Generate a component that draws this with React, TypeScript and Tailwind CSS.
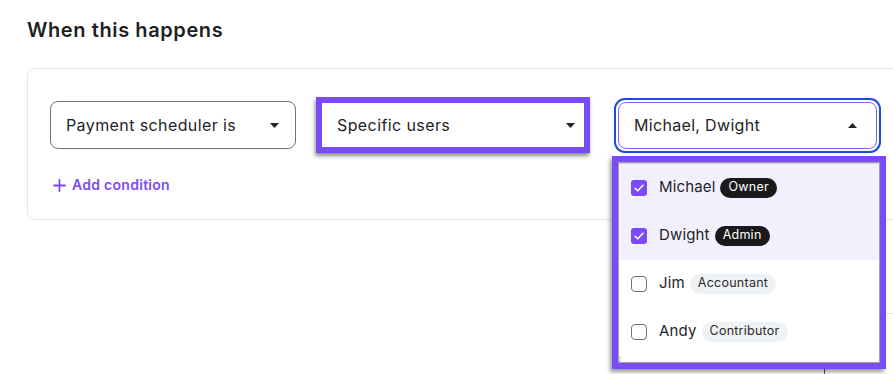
import React from "react";

const Caret = ({ up = false }: { up?: boolean }) => (
  <svg width="9" height="5" viewBox="0 0 9 5" className="shrink-0">
    {up ? (
      <path d="M0 5 L4.5 0 L9 5 Z" fill="#1f2328" />
    ) : (
      <path d="M0 0 L9 0 L4.5 5 Z" fill="#1f2328" />
    )}
  </svg>
);

const Check = () => (
  <svg width="10" height="8" viewBox="0 0 10 8" fill="none">
    <path d="M1 4.2 L3.7 6.8 L9 1.2" stroke="white" strokeWidth="1.5" strokeLinecap="round" strokeLinejoin="round" />
  </svg>
);

const users = [
  { name: "Michael", role: "Owner", checked: true },
  { name: "Dwight", role: "Admin", checked: true },
  { name: "Jim", role: "Accountant", checked: false },
  { name: "Andy", role: "Contributor", checked: false },
];

export default function App() {
  return (
    <div
      className="relative h-[374px] w-full overflow-hidden bg-white text-[#1f2328]"
      style={{ fontFamily: "Inter, 'Noto Sans', sans-serif" }}
    >
      {/* table behind the dropdown */}
      <div className="absolute left-[640px] right-0 top-[313px] h-[61px] border-t border-[#e5e7eb]">
        <div className="absolute left-[184px] top-0 h-full border-l border-[#4b5563]" />
      </div>

      <div className="relative pl-[27px] pt-[16px]">
        <h2 className="text-[20px] font-semibold leading-[28px] tracking-[0.03em] text-[#1f1f1f]">
          When this happens
        </h2>

        <div className="mt-[24px] mr-[-40px] rounded-lg border border-[#e5e7eb] pl-[22px] pt-[28px] pb-[24px]">
          <div className="flex h-[56px] items-center">
            {/* Select 1 */}
            <div className="flex h-[48px] w-[246px] items-center justify-between rounded-lg border border-[#6b7280] pl-[15px] pr-[16px]">
              <span className="text-[16px] tracking-[0.025em]">Payment scheduler is</span>
              <Caret />
            </div>

            {/* Select 2 (highlighted) */}
            <div className="ml-[20px] flex h-[56px] w-[274px] items-center justify-between border-[6px] border-[#7a4cf7] bg-white pl-[15px] pr-[9px] shadow-[-1px_3px_4px_rgba(0,0,0,0.45)]">
              <span className="text-[16px] tracking-[0.025em]">Specific users</span>
              <Caret />
            </div>

            {/* Select 3 (open) */}
            <div className="relative ml-[24px] h-[55px] w-[267px] rounded-[11px] border-2 border-[#1d4ed8] p-[2px]">
              <div className="flex h-full items-center justify-between rounded-[8px] border border-[#8b5cf6] pl-[15px] pr-[19px]">
                <span className="text-[16px] tracking-[0.02em]">Michael, Dwight</span>
                <Caret up />
              </div>

              <div className="absolute left-[-4px] top-[56px] z-10 h-[213px] w-[274px] border-[6px] border-[#7a4cf7] bg-white shadow-[-2px_3px_4px_rgba(0,0,0,0.4)]">
                <div className="h-full border border-[#a1a1aa] pt-[1px] shadow-[inset_1px_1px_2px_rgba(0,0,0,0.25)]">
                  {users.map((u) => (
                    <div
                      key={u.name}
                      className={`flex h-[48px] items-center pl-[12px] ${u.checked ? "bg-[#f3f0fd]" : "bg-white"}`}
                    >
                      {u.checked ? (
                        <span className="flex h-[16px] w-[16px] items-center justify-center rounded-[3px] bg-[#7a4cf7]">
                          <Check />
                        </span>
                      ) : (
                        <span className="h-[16px] w-[16px] rounded-[4px] border-[1.5px] border-[#6b7280]" />
                      )}
                      <span className="ml-[12px] text-[15px] tracking-[0.01em]">{u.name}</span>
                      <span
                        className={`ml-[5px] flex h-[20px] items-center rounded-full px-[8px] text-[12.5px] tracking-[0.02em] ${
                          u.checked ? "bg-[#1a1a1a] text-white" : "bg-[#eff2f5] text-[#2a2a2a]"
                        }`}
                      >
                        {u.role}
                      </span>
                    </div>
                  ))}
                </div>
              </div>
            </div>
          </div>

          <div className="mt-[22px] flex items-center text-[#7a4cf7]">
            <svg width="13" height="13" viewBox="0 0 13 13" className="ml-[3px]">
              <path d="M6.5 1 V12 M1 6.5 H12" stroke="currentColor" strokeWidth="1.8" strokeLinecap="round" />
            </svg>
            <span className="ml-[6px] text-[14px] font-semibold leading-[20px] tracking-[0.02em]">Add condition</span>
          </div>
        </div>
      </div>
    </div>
  );
}
